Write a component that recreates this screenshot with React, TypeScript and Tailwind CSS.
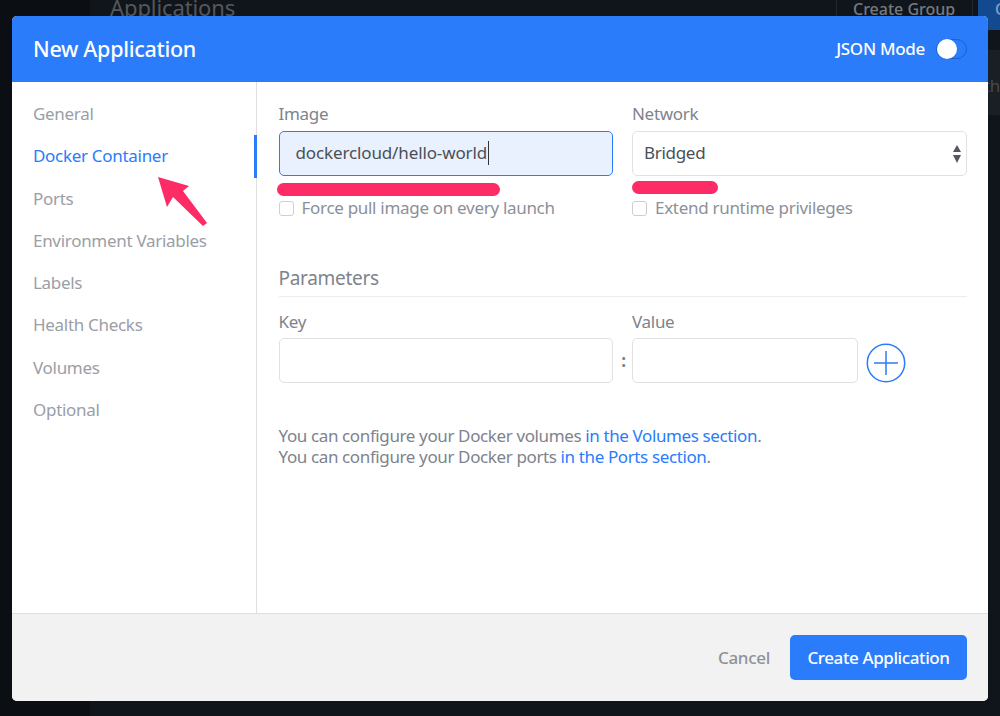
const navItems = [
  "General",
  "Docker Container",
  "Ports",
  "Environment Variables",
  "Labels",
  "Health Checks",
  "Volumes",
  "Optional",
];

function Background() {
  return (
    <div className="flex h-[716px] w-[1000px] bg-[#10151c]">
      <div className="h-full w-[90px] bg-[#0b0e13]" />
      <div className="flex-1">
        <div className="flex h-[30px] items-start justify-between overflow-hidden pl-[20px]">
          <span className="-mt-[8px] text-[22px] leading-[30px] tracking-[-0.1px] text-[#55575b]">Applications</span>
          <div className="flex">
            <div className="h-[30px] w-[137px] border-x border-[#24282e] pl-[16px] text-[16px] font-medium leading-[18px] tracking-normal text-[#77797c]">
              Create Group
            </div>
            <div className="ml-[5px] h-[30px] w-[22px] overflow-hidden whitespace-nowrap bg-[#134a8f] pl-[17px] text-[16px] font-medium leading-[18px] text-[#7f9fc9]">
              Create
            </div>
          </div>
        </div>
        <div className="mt-[20px] flex h-[65px] justify-end overflow-hidden bg-[#1a1e25] pt-[24px] text-[17px] leading-[24px] text-[#46494e]">
          Health
        </div>
      </div>
    </div>
  );
}

function Field({ label, children, className }: { label: string; children: React.ReactNode; className: string }) {
  return (
    <div className={className}>
      <div className="h-[26px] text-[17px] leading-[24px] text-[#7e838d]">{label}</div>
      {children}
    </div>
  );
}

function Check({ label }: { label: string }) {
  return (
    <label className="mt-[22px] flex items-center gap-[8px] text-[17px] leading-[20px] text-[#8b909a]">
      <span className="h-[15px] w-[15px] rounded-[3px] border-[1.5px] border-[#cfcfcf] bg-white" />
      {label}
    </label>
  );
}

export default function App() {
  return (
    <div className="relative h-[716px] w-[1000px] overflow-hidden font-['Noto_Sans',sans-serif] tracking-[-0.3px]">
      <Background />

      <div className="absolute left-[12px] top-[16px] flex h-[685px] w-[976px] flex-col overflow-hidden rounded-[5px] bg-white">
        <div className="flex h-[66px] items-center justify-between bg-[#2a7cfa] pl-[21px] pr-[21px] text-white">
          <h1 className="text-[21.5px] font-medium">New Application</h1>
          <div className="flex items-center gap-[11px] text-[17px] font-medium">
            JSON Mode
            <div className="flex h-[20px] w-[31px] items-center rounded-full border border-[#1c63d0] bg-[#2a7cfa]">
              <div className="h-[20px] w-[20px] rounded-full bg-white" />
            </div>
          </div>
        </div>

        <div className="flex flex-1">
          <nav className="w-[245px] shrink-0 border-r border-[#dfdfdf] pt-[11px]">
            {navItems.map((item) => (
              <div
                key={item}
                className={
                  item === "Docker Container"
                    ? "-mr-px h-[42.25px] border-r-[3px] border-[#2a7cfa] pl-[21px] text-[17px] leading-[42px] text-[#2a7cfa]"
                    : "h-[42.25px] pl-[21px] text-[17px] leading-[42px] text-[#9a9ea6]"
                }
              >
                {item}
              </div>
            ))}
          </nav>

          <div className="flex-1 pl-[21.5px] pr-[21px] pt-[20px]">
            <div className="flex gap-[19px]">
              <Field label="Image" className="w-[334.5px]">
                <div className="mt-[3px] flex h-[45px] items-center rounded-[5px] border-[1.5px] border-[#2a7cfa] bg-[#e9f1fe] pb-[2px] pl-[16px] text-[17px] tracking-[-0.13px] text-[#4b4f57]">
                  dockercloud/hello-world
                  <span className="ml-px h-[24px] w-px bg-[#333]" />
                </div>
                <Check label="Force pull image on every launch" />
              </Field>
              <Field label="Network" className="w-[335px]">
                <div className="mt-[3px] flex h-[45px] items-center justify-between rounded-[5px] border-[1.5px] border-[#e1e1e1] pb-[2px] pl-[11px] pr-[3px] text-[17px] text-[#4b4f57]">
                  Bridged
                  <svg className="mt-[2px]" width="12" height="20" viewBox="0 0 12 20" fill="#55585e">
                    <path d="M6 1 10 8H2zM6 19 2 11h8z" />
                  </svg>
                </div>
                <Check label="Extend runtime privileges" />
              </Field>
            </div>

            <h2 className="mt-[49px] h-[30px] border-b border-[#ececec] text-[19px] leading-[22px] text-[#7e838d]">
              Parameters
            </h2>

            <div className="mt-[13px] flex items-end">
              <Field label="Key" className="w-[334.5px]">
                <div className="mt-[2px] h-[45px] rounded-[5px] border-[1.5px] border-[#e1e1e1]" />
              </Field>
              <div className="flex h-[45px] w-[19px] items-center justify-center pl-[2px] text-[17px] font-bold text-[#7e838d]">:</div>
              <Field label="Value" className="w-[225.5px]">
                <div className="mt-[2px] h-[45px] rounded-[5px] border-[1.5px] border-[#e1e1e1]" />
              </Field>
              <svg className="ml-[8px]" width="40" height="40" viewBox="0 0 40 40" fill="none" stroke="#2a7cfa" strokeWidth="1.5">
                <circle cx="20" cy="20" r="18.7" />
                <path d="M20 8v24M8 20h24" />
              </svg>
            </div>

            <div className="mt-[42px] text-[17px] leading-[21px] tracking-[-0.38px] text-[#7e838d]">
              <p>
                You can configure your Docker volumes <a className="text-[#2a7cfa]">in the Volumes section</a>.
              </p>
              <p>
                You can configure your Docker ports <a className="text-[#2a7cfa]">in the Ports section</a>.
              </p>
            </div>
          </div>
        </div>

        <div className="flex h-[88px] items-center justify-end gap-[20px] border-t border-[#dedede] bg-[#f2f2f2] pr-[21px]">
          <button className="text-[17px] font-medium text-[#8f9298]">Cancel</button>
          <button className="h-[45px] w-[177px] rounded-[5px] bg-[#2a7cfa] text-[17px] font-medium tracking-[-0.4px] text-white">
            Create Application
          </button>
        </div>
      </div>

      {/* annotations drawn on top of the screenshot */}
      <div className="absolute left-[277px] top-[183px] h-[13px] w-[223px] rounded-full bg-[#fd2b66]" />
      <div className="absolute left-[632px] top-[181px] h-[13px] w-[86px] rounded-full bg-[#fd2b66]" />
      <svg className="absolute left-[150px] top-[170px]" width="65" height="65" viewBox="150 170 65 65">
        <path d="M158 177 189 186 183 191 207 223 203 226 173 197 167 207z" fill="#fd2b66" />
      </svg>
    </div>
  );
}
